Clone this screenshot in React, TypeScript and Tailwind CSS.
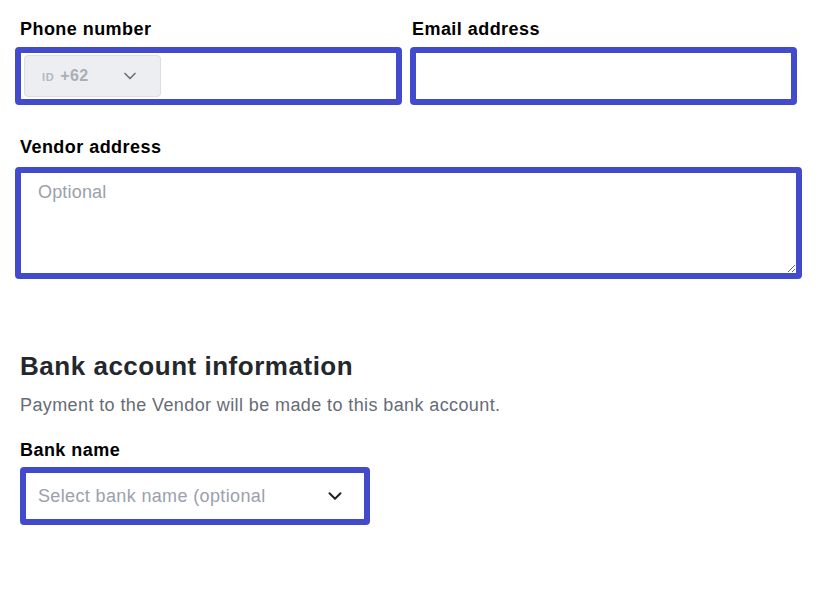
import { ChevronDown } from "lucide-react";

const font = { fontFamily: '"Liberation Sans", Arial, sans-serif' };

function Label({ children }: { children: React.ReactNode }) {
  return (
    <label className="block text-[18px] leading-[20px] font-bold text-black tracking-[0.025em]">
      {children}
    </label>
  );
}

export default function App() {
  return (
    <div
      className="w-[840px] h-[599px] bg-white overflow-hidden pl-[15px] pt-[19px]"
      style={font}
    >
      <div className="flex gap-[8px] w-[782px]">
        <div className="flex-1">
          <div className="pl-[5px]">
            <Label>Phone number</Label>
          </div>
          <div className="mt-[8px] h-[58px] border-[6px] border-[#434bcd] rounded-[4px] bg-white px-[3px] py-[2px] flex">
            <button className="w-[137px] h-full bg-[#eceef1] border border-[#dadde1] rounded-[4px] flex items-center pl-[17px] pr-[20px]">
              <span className="text-[11px] font-bold text-[#b3b8bf] tracking-[0.06em] mt-[3px]">
                ID
              </span>
              <span className="ml-[6px] text-[16px] font-bold text-[#a9aeb6] tracking-[0.02em]">
                +62
              </span>
              <ChevronDown
                className="ml-auto text-[#6b7079]"
                size={20}
                strokeWidth={2}
              />
            </button>
          </div>
        </div>
        <div className="flex-1">
          <div className="pl-[2px]">
            <Label>Email address</Label>
          </div>
          <input
            className="mt-[8px] w-full h-[58px] border-[6px] border-[#434bcd] rounded-[4px] bg-white outline-none px-[10px] text-[18px]"
            type="email"
          />
        </div>
      </div>

      <div className="mt-[32px] pl-[5px]">
        <Label>Vendor address</Label>
      </div>
      <textarea
        className="block mt-[10px] w-[787px] h-[112px] border-[6px] border-[#434bcd] rounded-[4px] bg-white outline-none pl-[17px] pt-[9px] text-[18px] leading-[20px] tracking-[0.01em] placeholder:text-[#9aa1ab]"
        placeholder="Optional"
      />

      <div className="pl-[5px]">
        <h2 className="mt-[71px] text-[26px] leading-[32px] font-bold text-[#24272c] tracking-[0.02em]">
          Bank account information
        </h2>
        <p className="mt-[11px] text-[18px] leading-[24px] text-[#656c76] tracking-[0.022em]">
          Payment to the Vendor will be made to this bank account.
        </p>
        <div className="mt-[23px]">
          <Label>Bank name</Label>
        </div>
        <div className="mt-[7px] w-[350px] h-[58px] border-[6px] border-[#434bcd] rounded-[4px] bg-white flex items-center pl-[12px] pr-[18px]">
          <span className="text-[18px] text-[#9aa1ab] tracking-[0.02em]">
            Select bank name (optional
          </span>
          <ChevronDown
            className="ml-auto text-[#1f2328]"
            size={22}
            strokeWidth={2.2}
          />
        </div>
      </div>
    </div>
  );
}
